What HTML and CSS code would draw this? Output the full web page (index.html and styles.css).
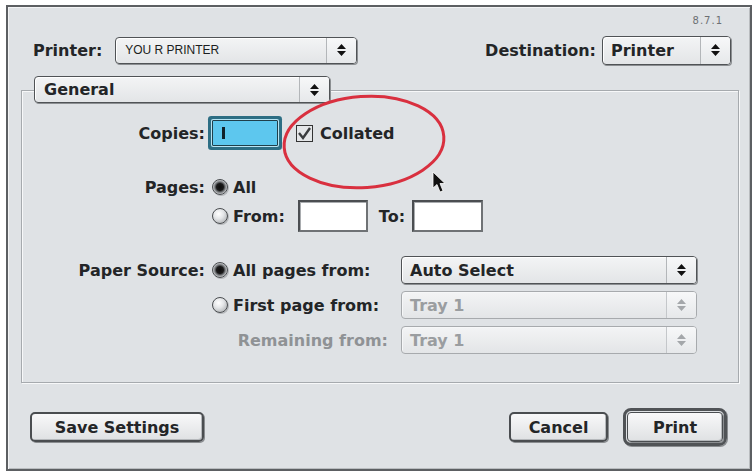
FILE: index.html
```html
<!DOCTYPE html>
<html>
<head>
<meta charset="utf-8">
<link rel="stylesheet" href="styles.css">
</head>
<body>
<div class="window">
  <div class="version">8.7.1</div>
  <div class="toprow">
    <div class="field">
      <span class="lbl-top printer-lbl">Printer:</span>
      <div class="popup printer-popup">
        <span class="popup-text plain">YOU R PRINTER</span>
        <span class="arrows"><svg width="9" height="12" viewBox="0 0 9 12"><path d="M4.5 0 L9 5 H0 Z M0 7 H9 L4.5 12 Z" fill="#111"/></svg></span>
      </div>
    </div>
    <div class="field">
      <span class="lbl-top dest-lbl">Destination:</span>
      <div class="popup dest-popup">
        <span class="popup-text">Printer</span>
        <span class="arrows"><svg width="9" height="12" viewBox="0 0 9 12"><path d="M4.5 0 L9 5 H0 Z M0 7 H9 L4.5 12 Z" fill="#111"/></svg></span>
      </div>
    </div>
  </div>

  <div class="group">
    <div class="popup general-popup">
      <span class="popup-text">General</span>
      <span class="arrows"><svg width="9" height="12" viewBox="0 0 9 12"><path d="M4.5 0 L9 5 H0 Z M0 7 H9 L4.5 12 Z" fill="#111"/></svg></span>
    </div>

    <div class="row row-copies">
      <span class="lbl">Copies:</span>
      <div class="copies-input"><span class="caret"></span></div>
      <span class="checkbox"><svg width="17" height="17" viewBox="0 0 17 17"><rect x="0.5" y="0.5" width="16" height="16" fill="#e4e6e8" stroke="#333"/><path d="M3 8 L7 13 L14 3" fill="none" stroke="#3a3c3e" stroke-width="2.4"/></svg></span>
      <span class="txt collated">Collated</span>
    </div>

    <div class="row row-all">
      <span class="lbl">Pages:</span>
      <span class="radio on"></span>
      <span class="txt">All</span>
    </div>

    <div class="row row-from">
      <span class="lbl"></span>
      <span class="radio"></span>
      <span class="txt">From:</span>
      <div class="textbox from-box"></div>
      <span class="txt to-lbl">To:</span>
      <div class="textbox to-box"></div>
    </div>

    <div class="row row-src">
      <span class="lbl">Paper Source:</span>
      <div class="sub"><span class="radio on"></span><span class="txt">All pages from:</span></div>
      <div class="popup src-popup">
        <span class="popup-text">Auto Select</span>
        <span class="arrows"><svg width="9" height="12" viewBox="0 0 9 12"><path d="M4.5 0 L9 5 H0 Z M0 7 H9 L4.5 12 Z" fill="#111"/></svg></span>
      </div>
    </div>

    <div class="row row-src2">
      <span class="lbl"></span>
      <div class="sub"><span class="radio"></span><span class="txt">First page from:</span></div>
      <div class="popup src-popup disabled">
        <span class="popup-text">Tray 1</span>
        <span class="arrows"><svg width="9" height="12" viewBox="0 0 9 12"><path d="M4.5 0 L9 5 H0 Z M0 7 H9 L4.5 12 Z" fill="#a4a7aa"/></svg></span>
      </div>
    </div>

    <div class="row row-src2">
      <span class="lbl"></span>
      <div class="sub sub-right"><span class="txt gray">Remaining from:</span></div>
      <div class="popup src-popup disabled">
        <span class="popup-text">Tray 1</span>
        <span class="arrows"><svg width="9" height="12" viewBox="0 0 9 12"><path d="M4.5 0 L9 5 H0 Z M0 7 H9 L4.5 12 Z" fill="#a4a7aa"/></svg></span>
      </div>
    </div>
  </div>

  <div class="buttons">
    <div class="btn save">Save Settings</div>
    <div class="spacer"></div>
    <div class="btn cancel">Cancel</div>
    <div class="default-ring"><div class="btn print">Print</div></div>
  </div>
</div>

<svg class="overlay" width="756" height="473" viewBox="0 0 756 473">
  <ellipse cx="364" cy="142" rx="80" ry="45.5" transform="rotate(-4 364 142)" fill="none" stroke="#d9303f" stroke-width="3"/>
  <path d="M433 172 L433 188 L437 184.5 L440 192 L443 190.8 L440 183.5 L445 183.5 Z" fill="#111" stroke="#fff" stroke-width="0.8"/>
</svg>
</body>
</html>
```

FILE: styles.css
```css
* { box-sizing: border-box; }

body {
  margin: 0;
  background: #ffffff;
  position: relative;
  width: 756px;
  height: 473px;
  overflow: hidden;
  font-family: "DejaVu Sans", Verdana, sans-serif;
  font-weight: bold;
  font-size: 16px;
  color: #232527;
}

.window {
  margin: 5px 0 0 6px;
  width: 746px;
  height: 466px;
  border: 2px solid #5c5f62;
  box-shadow: inset 1px 1px 0 #f3f4f5, inset -1px -1px 0 #b9bcbf;
  background: #dfe2e5;
  display: flex;
  flex-direction: column;
}

.version {
  margin-top: 8px;
  height: 12px;
  line-height: 12px;
  font-size: 10px;
  font-weight: normal;
  text-align: right;
  padding-right: 27px;
  color: #6d7073;
  letter-spacing: 1px;
  font-family: "DejaVu Sans", sans-serif;
}

.toprow {
  margin-top: 9px;
  display: flex;
  justify-content: space-between;
  padding: 0 19px 0 25px;
  height: 29px;
}

.field {
  display: flex;
  align-items: center;
  height: 28px;
}

.printer-lbl { margin-right: 13px; }
.dest-lbl { margin-right: 6px; }

/* Popup menus */
.popup {
  display: flex;
  align-items: stretch;
  height: 28px;
  border: 1px solid #505356;
  border-radius: 4px;
  background: linear-gradient(#f3f4f5, #e3e5e7);
  box-shadow: 1px 1px 0 #8c8f92, inset 1px 1px 0 #ffffff;
}

.popup-text {
  flex: 1;
  display: flex;
  align-items: center;
  padding-left: 9px;
  white-space: nowrap;
}

.popup-text.plain {
  font-family: "Liberation Sans", Arial, sans-serif;
  font-weight: normal;
  font-size: 12px;
  color: #1c1e20;
}

.arrows {
  width: 30px;
  flex: none;
  border-left: 1px solid #b3b6b9;
  display: flex;
  align-items: center;
  justify-content: center;
  background: linear-gradient(#f7f8f9, #e6e8ea);
  border-radius: 0 3px 3px 0;
}

.printer-popup { width: 242px; height: 27px; }
.printer-popup .popup-text { padding-left: 9px; }
.dest-popup { width: 129px; height: 29px; }
.dest-popup .popup-text { padding-left: 8px; }

/* Group box */
.group {
  position: relative;
  margin: 25px 11px 0 13px;
  border: 1px solid #a6aaae;
  box-shadow: inset 1px 1px 0 #f7f8f9, 1px 1px 0 #f7f8f9;
  padding: 25px 0 28px 0;
}

.general-popup {
  position: absolute;
  left: 12px;
  top: -15px;
  width: 296px;
  height: 27px;
}

.general-popup .popup-text { padding-left: 9px; }

.row {
  display: flex;
  align-items: center;
  white-space: nowrap;
}

.lbl {
  width: 183px;
  flex: none;
  text-align: right;
  margin-right: 7px;
}

.row-copies { height: 34px; }
.row-all { height: 20px; margin-top: 27px; }
.row-from { height: 32px; margin-top: 3px; }
.row-src { height: 28px; margin-top: 24px; }
.row-src2 { height: 28px; margin-top: 7px; }

.copies-input {
  width: 66px;
  height: 26px;
  background: #5dc7ee;
  border: 1px solid #1f3f4a;
  box-shadow: 0 0 0 1px #b8e4f3, 0 0 0 4px #2d6e84;
  position: relative;
  border-radius: 1px;
}

.caret {
  position: absolute;
  left: 9px;
  top: 6px;
  width: 3px;
  height: 12px;
  background: #10222a;
}

.checkbox {
  display: flex;
  margin-left: 18px;
}

.txt { margin-left: 5px; }
.collated { margin-left: 7px; }

.radio {
  width: 16px;
  height: 16px;
  flex: none;
  border-radius: 50%;
  border: 1px solid #4a4d50;
  background: radial-gradient(circle at 40% 35%, #ffffff 0, #e4e6e8 40%, #9da0a3 100%);
  box-shadow: 1px 1px 0 #b4b7ba;
}

.radio.on {
  background: radial-gradient(circle at 50% 50%, #0c0c0c 0, #1a1a1a 3.5px, #6b6e71 5px, #c9cbcd 7px, #9a9da0 8px);
}

.textbox {
  height: 32px;
  background: #ffffff;
  border: 2px solid #4b4e51;
  border-right-color: #6f7275;
  border-bottom-color: #6f7275;
  box-shadow: inset 1px 1px 0 #a9acaf;
}

.from-box { width: 70px; margin-left: 13px; }
.to-lbl { margin-left: 11px; }
.to-box { width: 71px; margin-left: 7px; }

.sub {
  width: 180px;
  flex: none;
  display: flex;
  align-items: center;
  margin-right: 9px;
}

.sub-right {
  justify-content: flex-end;
  padding-right: 4px;
}

.gray { color: #8f9295; }

.src-popup { width: 296px; }
.src-popup .popup-text { padding-left: 8px; }

.popup.disabled {
  border-color: #a7aaad;
  box-shadow: inset 1px 1px 0 #f6f7f8;
  color: #9a9da0;
}

.popup.disabled .arrows { border-left-color: #c4c7ca; }

/* Buttons */
.buttons {
  margin-top: 25px;
  height: 38px;
  display: flex;
  align-items: center;
  padding: 0 23px 0 22px;
}

.spacer { flex: 1; }

.btn {
  height: 30px;
  display: flex;
  align-items: center;
  justify-content: center;
  border: 2px solid #4a4d50;
  border-radius: 5px;
  background: linear-gradient(#f8f8f9, #dfe1e3);
  box-shadow: 1px 1px 0 #8a8d90, inset -1px -1px 0 #b5b8bb;
}

.save { width: 174px; }
.cancel { width: 99px; margin-right: 15px; }

.default-ring {
  width: 104px;
  height: 38px;
  border: 3px solid #505356;
  border-radius: 8px;
  padding: 1px;
  display: flex;
  box-shadow: 1px 1px 0 #8a8d90;
}

.print {
  width: 100%;
  height: 100%;
  border-width: 1px;
  border-radius: 4px;
}

.overlay {
  position: absolute;
  left: 0;
  top: 0;
  pointer-events: none;
}
```
